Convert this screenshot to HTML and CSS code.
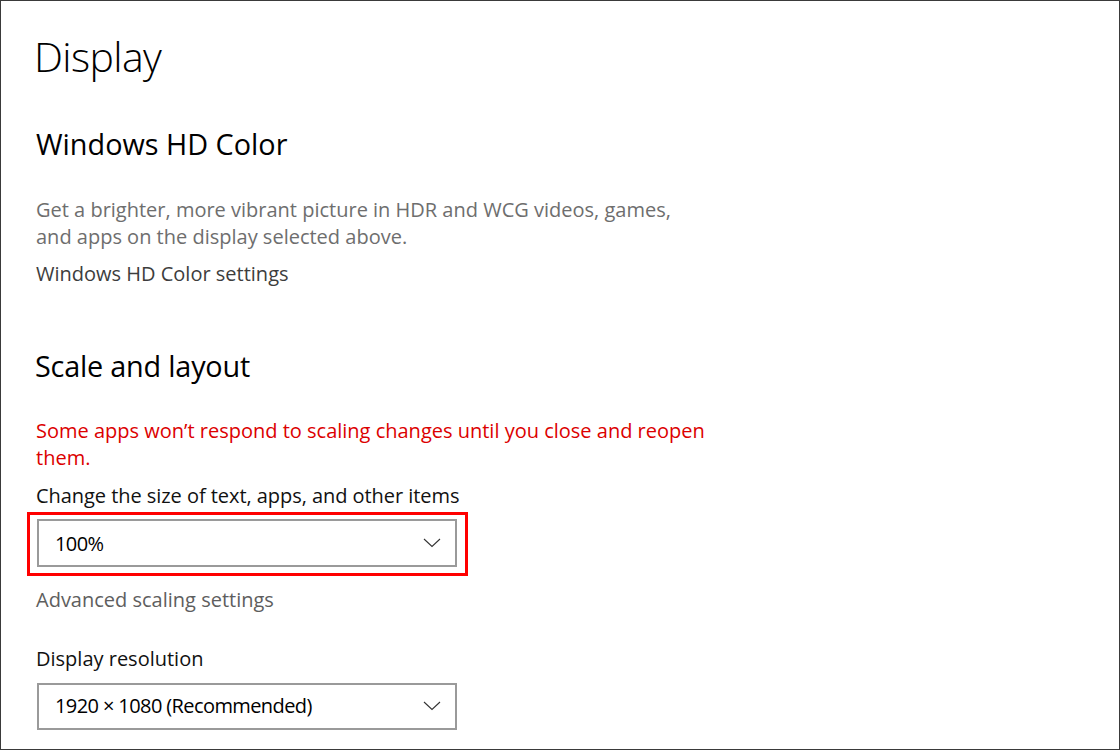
FILE: index.html
```html
<!DOCTYPE html>
<html lang="en">
<head>
<meta charset="utf-8">
<title>Display</title>
<link rel="stylesheet" href="styles.css">
</head>
<body>
<div class="window">
  <h1 class="page-title">Display</h1>

  <h2 class="section-title hd-title">Windows HD Color</h2>
  <p class="desc">Get a brighter, more vibrant picture in HDR and WCG videos, games,<br>and apps on the display selected above.</p>
  <a class="link hd-link">Windows HD Color settings</a>

  <h2 class="section-title scale-title">Scale and layout</h2>
  <p class="warning">Some apps won’t respond to scaling changes until you close and reopen<br>them.</p>

  <div class="label size-label">Change the size of text, apps, and other items</div>
  <div class="highlight">
    <div class="dropdown dd-scale">
      <span class="dd-value">100%</span>
      <svg class="chevron" width="18" height="10" viewBox="0 0 18 10"><polyline points="1,1 9,8.5 17,1" fill="none" stroke="#333" stroke-width="1.1"/></svg>
    </div>
  </div>
  <a class="link adv-link">Advanced scaling settings</a>

  <div class="label res-label">Display resolution</div>
  <div class="dropdown dd-res">
    <span class="dd-value">1920 × 1080 (Recommended)</span>
    <svg class="chevron" width="18" height="10" viewBox="0 0 18 10"><polyline points="1,1 9,8.5 17,1" fill="none" stroke="#333" stroke-width="1.1"/></svg>
  </div>
</div>
</body>
</html>
```

FILE: styles.css
```css
html, body {
  margin: 0;
  padding: 0;
  background: #ffffff;
}

.window {
  box-sizing: border-box;
  width: 1120px;
  height: 750px;
  border: 1px solid #3a3a3a;
  padding: 27px 0 0 35px;
  overflow: hidden;
  font-family: "Open Sans", "Noto Sans", "Liberation Sans", sans-serif;
  color: #000;
  display: flex;
  flex-direction: column;
  align-items: flex-start;
}

.page-title {
  margin: 0 0 0 -2px;
  font-size: 41px;
  font-weight: 300;
  line-height: 56px;
  letter-spacing: -0.6px;
  color: #000;
}

.section-title {
  margin: 0;
  font-size: 28.8px;
  font-weight: 400;
  line-height: 36px;
  letter-spacing: 0;
  color: #000;
}

.hd-title { margin-top: 42px; }
.scale-title { margin-top: 61px; margin-left: -1px; letter-spacing: -0.2px; }

.desc, .warning {
  margin: 0;
  font-size: 20px;
  line-height: 27px;
  letter-spacing: 0;
}

.desc {
  margin-top: 34px;
  color: #6e6e6e;
}

.warning {
  margin-top: 33px;
  color: #dc0000;
}

.link {
  display: block;
  font-size: 20px;
  line-height: 27px;
  letter-spacing: 0;
}

.hd-link {
  margin-top: 10px;
  color: #3d3d3d;
}

.adv-link {
  margin-top: 19px;
  color: #5e5e5e;
}

.label {
  font-size: 20px;
  line-height: 27px;
  letter-spacing: 0;
  color: #111;
}

.size-label { margin-top: 11px; letter-spacing: -0.05px; }
.res-label { margin-top: 32px; }

.highlight {
  position: relative;
  margin-top: 10px;
}

.highlight::after {
  content: "";
  position: absolute;
  left: -9px;
  top: -7px;
  right: -11px;
  bottom: -9px;
  border: 3px solid #ff0000;
  pointer-events: none;
}

.dropdown {
  box-sizing: border-box;
  width: 420px;
  border: 2.5px solid #9a9a9a;
  display: flex;
  align-items: center;
  justify-content: space-between;
  padding: 0 14px 0 16px;
  font-size: 20px;
  letter-spacing: -0.6px;
  color: #000;
}

.dd-scale {
  height: 48px;
  margin-left: 1px;
}

.dd-res {
  height: 47px;
  margin-top: 11px;
  margin-left: 1px;
  padding-bottom: 2px;
}

.dd-value {
  line-height: 27px;
}

.chevron {
  display: block;
}
```
